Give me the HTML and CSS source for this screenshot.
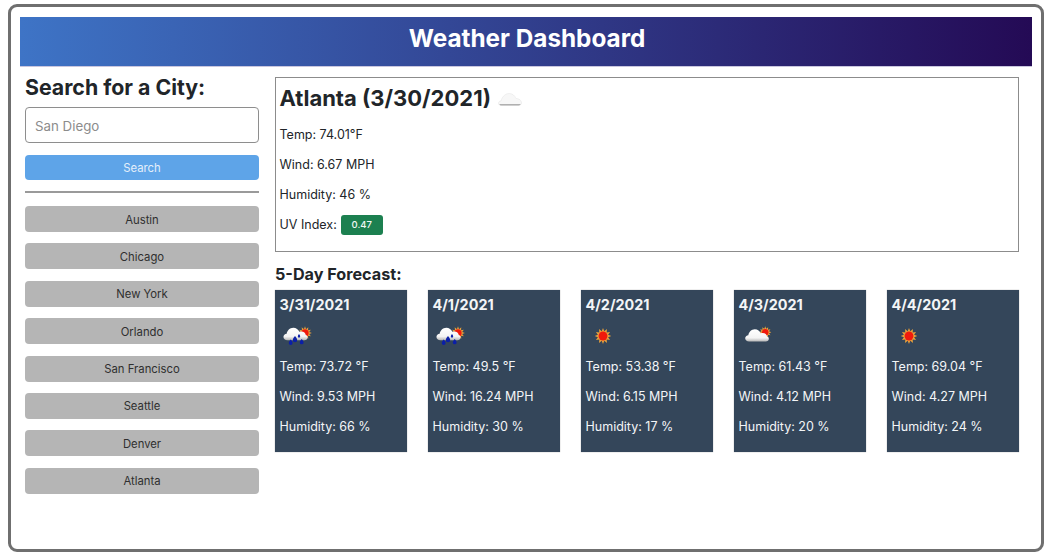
FILE: index.html

```html
<!DOCTYPE html>
<html lang="en">
<head>
  <meta charset="UTF-8" />
  <meta name="viewport" content="width=device-width, initial-scale=1.0" />
  <title>Weather Dashboard</title>
  <link rel="stylesheet" href="styles.css">
</head>
<body>
  <svg class="icon-defs" aria-hidden="true">
    <defs>
      <linearGradient id="cloudFill" x1="0" y1="0" x2="0" y2="1">
        <stop offset="0" stop-color="#ffffff" />
        <stop offset="0.7" stop-color="#f4f4f4" />
        <stop offset="1" stop-color="#b5b5b5" />
      </linearGradient>
      <symbol id="sun" viewBox="0 0 20 20">
        <path d="M10 0.5l1.5 4 3.2-2.6-.4 4 4-.7-2.3 3.3 3.8 1.5-3.8 1.5 2.3 3.300-4-.7.4 4-3.2-2.600-1.5 4-1.5-4-3.2 2.600.4-4-4 .7 2.300-3.300-3.800-1.500 3.800-1.500-2.300-3.300 4 .7-.4-4 3.200 2.600z" fill="#e9a13b" />
        <circle cx="10" cy="10" r="5.200" fill="#f01a0c" />
      </symbol>
      <symbol id="cloud" viewBox="0 0 28 16">
        <path d="M5 15.500c-2.600 0-4.500-1.600-4.500-3.700 0-2 1.600-3.400 3.600-3.600C4.700 4.700 7.600 1.500 11.500 1.500c3.200 0 5.800 1.900 6.800 4.600 .7-.3 1.400-.4 2.200-.4 2.800 0 4.800 1.800 5 4.100 1.300.4 2 1.400 2 2.600 0 1.900-1.500 3.100-3.500 3.100z" fill="url(#cloudFill)" />
      </symbol>
      <symbol id="rain" viewBox="0 0 50 36">
        <use href="#sun" x="20" y="10" width="14" height="14" />
        <use href="#cloud" x="5" y="10" width="25" height="15" />
        <path d="M12.700 23.500c1.300 1.600 1.900 2.600 1.900 3.500a1.900 1.900 0 0 1-3.800 0c0-.9.600-1.900 1.900-3.500zM17 20c1.500 1.800 2.200 3 2.200 4a2.200 2.200 0 0 1-4.400 0c0-1 .7-2.200 2.200-4zM21 18c.8 1 1.200 1.800 1.200 2.400a1.200 1.200 0 0 1-2.400 0c0-.6.400-1.400 1.200-2.400zM23.700 23c1.200 1.500 1.900 2.500 1.900 3.400a1.900 1.900 0 0 1-3.800 0c0-.9.700-1.900 1.900-3.400z" fill="#0b1fa8" />
      </symbol>
      <symbol id="clear" viewBox="0 0 50 36">
        <use href="#sun" x="10.500" y="11.500" width="17" height="17" />
      </symbol>
      <symbol id="partly" viewBox="0 0 50 36">
        <use href="#sun" x="22" y="10" width="12.500" height="12.500" />
        <use href="#cloud" x="7" y="12" width="26" height="14" />
      </symbol>
    </defs>
  </svg>

  <div class="frame">
    <header class="banner">
      <h1>Weather Dashboard</h1>
    </header>

    <div class="layout">
      <aside class="sidebar">
        <h2>Search for a City:</h2>
        <input class="city-input" type="text" placeholder="San Diego" />
        <button class="btn btn-search">Search</button>
        <hr class="divider" />
        <div class="history">
          <button class="btn btn-city">Austin</button>
          <button class="btn btn-city">Chicago</button>
          <button class="btn btn-city">New York</button>
          <button class="btn btn-city">Orlando</button>
          <button class="btn btn-city">San Francisco</button>
          <button class="btn btn-city">Seattle</button>
          <button class="btn btn-city">Denver</button>
          <button class="btn btn-city">Atlanta</button>
        </div>
      </aside>

      <main class="content">
        <section class="current">
          <h2 class="current-title">Atlanta (3/30/2021)
            <svg class="icon-overcast" viewBox="0 0 26 16" aria-hidden="true">
              <path d="M4 14.500c-2.200 0-3.500-1-3.500-2.500 0-1.300 1.100-2.200 2.800-2.400C4 6 7.300 1.500 12 1.500c3.700 0 6.300 2.300 7.300 5.300 3.500.2 6.200 2 6.200 4.700 0 1.900-1.500 3-3.500 3z" fill="#f7f7f7" stroke="#e6e6e6" stroke-width="0.6" />
              <path d="M1.500 12.800h23c-.4 1-1.400 1.700-3 1.700H4c-1.300 0-2.200-.7-2.500-1.700z" fill="#b0b0b0" />
            </svg>
          </h2>
          <p>Temp: 74.01°F</p>
          <p>Wind: 6.67 MPH</p>
          <p>Humidity: 46 %</p>
          <p>UV Index: <span class="badge">0.47</span></p>
        </section>

        <h3 class="forecast-title">5-Day Forecast:</h3>
        <section class="forecast">
          <article class="day">
            <h4>3/31/2021</h4>
            <svg class="day-icon" aria-hidden="true"><use href="#rain" /></svg>
            <p>Temp: 73.72 °F</p>
            <p>Wind: 9.53 MPH</p>
            <p>Humidity: 66 %</p>
          </article>
          <article class="day">
            <h4>4/1/2021</h4>
            <svg class="day-icon" aria-hidden="true"><use href="#rain" /></svg>
            <p>Temp: 49.5 °F</p>
            <p>Wind: 16.24 MPH</p>
            <p>Humidity: 30 %</p>
          </article>
          <article class="day">
            <h4>4/2/2021</h4>
            <svg class="day-icon" aria-hidden="true"><use href="#clear" /></svg>
            <p>Temp: 53.38 °F</p>
            <p>Wind: 6.15 MPH</p>
            <p>Humidity: 17 %</p>
          </article>
          <article class="day">
            <h4>4/3/2021</h4>
            <svg class="day-icon" aria-hidden="true"><use href="#partly" /></svg>
            <p>Temp: 61.43 °F</p>
            <p>Wind: 4.12 MPH</p>
            <p>Humidity: 20 %</p>
          </article>
          <article class="day">
            <h4>4/4/2021</h4>
            <svg class="day-icon" aria-hidden="true"><use href="#clear" /></svg>
            <p>Temp: 69.04 °F</p>
            <p>Wind: 4.27 MPH</p>
            <p>Humidity: 24 %</p>
          </article>
        </section>
      </main>
    </div>
  </div>
</body>
</html>
```

FILE: styles.css

```css
* {
  box-sizing: border-box;
}
body {
  margin: 0;
  background: #fff;
  font-family: Inter, "Liberation Sans", sans-serif;
  color: #212529;
}
.icon-defs {
  position: absolute;
  width: 0;
  height: 0;
}
.frame {
  width: 1036px;
  height: 548px;
  margin: 4px 0 0 8px;
  padding: 10px 9px 0;
  border: 3px solid #6f6f6f;
  border-radius: 9px;
}
.banner {
  height: 50px;
  padding: 0 0 7px 2px;
  display: flex;
  align-items: center;
  justify-content: center;
  background: linear-gradient(to right, #3e74c6, #240a55);
  border-bottom: 1px solid #c9c6de;
}
.banner h1 {
  margin: 0;
  font-size: 24.3px;
  font-weight: 700;
  color: #fff;
}
.layout {
  display: flex;
  gap: 16px;
  padding: 0 13px 0 5px;
}
.sidebar {
  width: 234px;
  flex: none;
  display: flex;
  flex-direction: column;
}
.sidebar h2 {
  margin: 7px 0 0;
  height: 33px;
  font-size: 21.3px;
  line-height: 26px;
  font-weight: 700;
}
.city-input {
  height: 36px;
  padding: 1px 9px 0;
  border: 1px solid #8e8e8e;
  border-radius: 4px;
  font: 13.3px Inter, "Liberation Sans", sans-serif;
  outline: none;
}
.city-input::placeholder {
  color: #8c8c8c;
}
.btn {
  width: 100%;
  border: 0;
  border-radius: 4px;
  font: 11.3px Inter, "Liberation Sans", sans-serif;
  padding: 0;
}
.btn-search {
  height: 25px;
  margin-top: 12px;
  background: #5ea4e8;
  color: #e4effb;
}
.divider {
  width: 100%;
  margin: 11px 0 13px;
  border: 0;
  border-top: 2px solid #9a9a9a;
}
.history {
  display: flex;
  flex-direction: column;
  gap: 11.4px;
}
.btn-city {
  height: 26px;
  padding-top: 1px;
  background: #b5b5b5;
  color: #2f2f2f;
}
.content {
  flex: 1;
  padding-top: 10px;
}
.current {
  height: 175px;
  padding: 6px 4px 6px 3.5px;
  border: 1px solid #8c8c8c;
}
.current-title {
  margin: 0 0 8px;
  font-size: 22px;
  line-height: 28px;
  font-weight: 700;
  display: flex;
  align-items: center;
  gap: 7px;
}
.icon-overcast {
  width: 24px;
  height: 15px;
  margin-top: 3px;
}
.current p {
  margin: 0;
  height: 30px;
  display: flex;
  align-items: center;
  gap: 4px;
  font-size: 12.5px;
  line-height: 20px;
}
.badge {
  width: 42px;
  height: 20px;
  display: flex;
  align-items: center;
  justify-content: center;
  background: #1c8050;
  border-radius: 3px;
  color: #f2f7f4;
  font-size: 9.5px;
  font-weight: 500;
}
.forecast-title {
  margin: 13px 0 6px;
  font-size: 16.2px;
  line-height: 19px;
  font-weight: 700;
}
.forecast {
  display: flex;
  justify-content: space-between;
}
.day {
  width: 132px;
  height: 162px;
  padding: 6px 5px 0 4.5px;
  background: #34465a;
  color: #f3f5f7;
  box-shadow: 0 0 1px rgba(0,0,0,0.4);
}
.day h4 {
  margin: 0;
  font-size: 14.4px;
  line-height: 18px;
  font-weight: 700;
}
.day-icon {
  display: block;
  width: 50px;
  height: 36px;
  margin: 2px 0 0 -2px;
}
.day p {
  margin: 0;
  height: 30px;
  display: flex;
  align-items: center;
  font-size: 12.5px;
  line-height: 20px;
}
```
